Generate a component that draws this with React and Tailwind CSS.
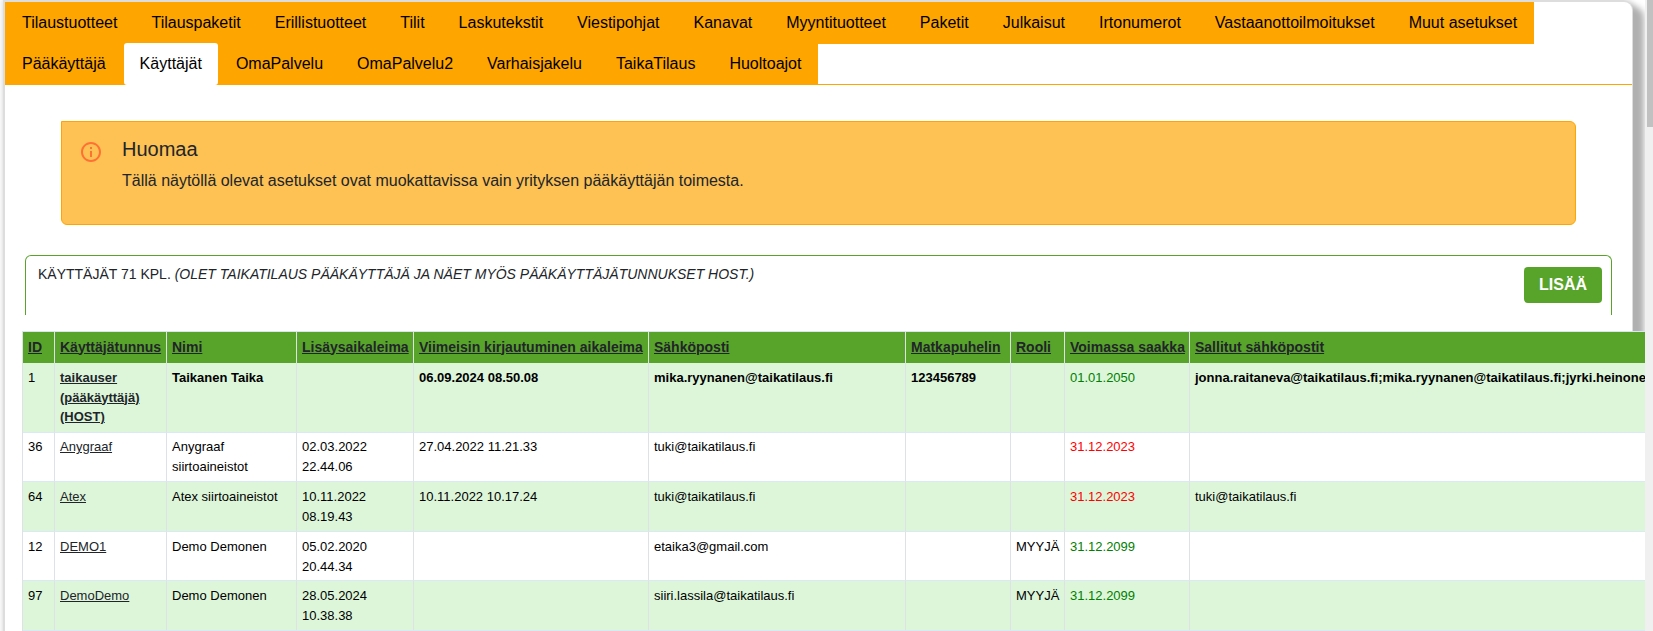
const TABS_TOP = ['Tilaustuotteet', 'Tilauspaketit', 'Erillistuotteet', 'Tilit', 'Laskutekstit', 'Viestipohjat', 'Kanavat', 'Myyntituotteet', 'Paketit', 'Julkaisut', 'Irtonumerot', 'Vastaanottoilmoitukset', 'Muut asetukset'];
const TABS_BOTTOM = ['Pääkäyttäjä', 'Käyttäjät', 'OmaPalvelu', 'OmaPalvelu2', 'Varhaisjakelu', 'TaikaTilaus', 'Huoltoajot'];

const COLUMNS = [
  ['ID', 32], ['Käyttäjätunnus', 112], ['Nimi', 130], ['Lisäysaikaleima', 117],
  ['Viimeisin kirjautuminen aikaleima', 235], ['Sähköposti', 257], ['Matkapuhelin', 105],
  ['Rooli', 54], ['Voimassa saakka', 125], ['Sallitut sähköpostit', 700],
];

const ROWS = [
  { h: 'h-[70px]', pad: 'pt-[5px]', bold: true, valid: true, cells: ['1', ['taikauser', '(pääkäyttäjä)', '(HOST)'], 'Taikanen Taika', '', '06.09.2024 08.50.08', 'mika.ryynanen@taikatilaus.fi', '123456789', '', '01.01.2050', 'jonna.raitaneva@taikatilaus.fi;mika.ryynanen@taikatilaus.fi;jyrki.heinone'] },
  { h: 'h-[49px]', pad: 'pt-1', valid: false, cells: ['36', ['Anygraaf'], 'Anygraaf siirtoaineistot', '02.03.2022 22.44.06', '27.04.2022 11.21.33', 'tuki@taikatilaus.fi', '', '', '31.12.2023', ''] },
  { h: 'h-[50px]', pad: 'pt-[5px]', valid: false, cells: ['64', ['Atex'], 'Atex siirtoaineistot', '10.11.2022 08.19.43', '10.11.2022 10.17.24', 'tuki@taikatilaus.fi', '', '', '31.12.2023', 'tuki@taikatilaus.fi'] },
  { h: 'h-[49px]', pad: 'pt-[5px]', valid: true, cells: ['12', ['DEMO1'], 'Demo Demonen', '05.02.2020 20.44.34', '', 'etaika3@gmail.com', '', 'MYYJÄ', '31.12.2099', ''] },
  { h: 'h-[50px]', pad: 'pt-[5px]', valid: true, cells: ['97', ['DemoDemo'], 'Demo Demonen', '28.05.2024 10.38.38', '', 'siiri.lassila@taikatilaus.fi', '', 'MYYJÄ', '31.12.2099', ''] },
];

function Tab({ label, active }) {
  return (
    <a className={active
      ? 'mx-px rounded-[3px] bg-white px-4 py-[9px] text-black'
      : 'border border-[#ffa500] px-4 py-2 text-black'}>
      {label}
    </a>
  );
}

function Tabs() {
  return (
    <nav className="flex h-[83px] flex-col items-start border-b border-[#ffa500] text-base leading-6">
      <div className="flex h-[42px] shrink-0 bg-[#ffa500]">
        {TABS_TOP.map((t) => <Tab key={t} label={t} />)}
      </div>
      <div className="-mt-px flex h-[42px] shrink-0 bg-[#ffa500]">
        {TABS_BOTTOM.map((t) => <Tab key={t} label={t} active={t === 'Käyttäjät'} />)}
      </div>
    </nav>
  );
}

function Notice() {
  return (
    <section className="mt-9 mr-14 ml-14 flex h-[104px] rounded-md rounded-tl-none border border-[#ffa500] bg-[#fdc154] text-[#212529]">
      <svg className="mt-[18px] ml-[17px] size-6" viewBox="0 0 24 24" fill="#ff7033">
        <path d="M11 7h2v2h-2zm0 4h2v6h-2zm1-9C6.48 2 2 6.48 2 12s4.48 10 10 10 10-4.48 10-10S17.52 2 12 2zm0 18c-4.41 0-8-3.59-8-8s3.59-8 8-8 8 3.59 8 8-3.59 8-8 8z" />
      </svg>
      <div className="ml-[19px] pt-[15px]">
        <h2 className="text-xl leading-6">Huomaa</h2>
        <p className="mt-2 text-base leading-6">Tällä näytöllä olevat asetukset ovat muokattavissa vain yrityksen pääkäyttäjän toimesta.</p>
      </div>
    </section>
  );
}

function UserTable() {
  return (
    <table className="mt-4 ml-[17px] w-[1867px] table-fixed border-separate border-spacing-0 border-t border-l border-t-[#d9e6f2] border-l-[#dee2e6] text-[13px] leading-[19.5px]">
      <colgroup>
        {COLUMNS.map(([name, width]) => <col key={name} style={{ width }} />)}
      </colgroup>
      <thead>
        <tr className="h-[31px] bg-[#58a42b] text-left text-sm text-[#212529]">
          {COLUMNS.map(([name]) => (
            <th key={name} className="border-r border-[#dee2e6] p-0 pb-0.5 pl-[5px] align-middle font-bold whitespace-nowrap underline">{name}</th>
          ))}
        </tr>
      </thead>
      <tbody>
        {ROWS.map((row) => (
          <tr key={row.cells[0]} className={`${row.h} odd:bg-[#ddf6da] even:bg-white`}>
            {row.cells.map((cell, i) => (
              <td
                key={i}
                className={[
                  'border-r border-b border-r-[#dee2e6] border-b-[#d9eaf5] p-0 pr-1 pl-[5px] align-top',
                  row.pad,
                  row.bold && i > 0 && i !== 8 ? 'font-bold' : '',
                  i === 9 ? 'whitespace-nowrap' : '',
                  i === 8 ? (row.valid ? 'text-[#008000]' : 'text-[#ff0000]') : 'text-black',
                ].join(' ')}
              >
                {i === 1
                  ? cell.map((line) => <a key={line} className="block text-[#212529] underline">{line}</a>)
                  : cell}
              </td>
            ))}
          </tr>
        ))}
      </tbody>
    </table>
  );
}

export default function App() {
  return (
    <div className="flex h-[631px] w-[1653px] overflow-hidden bg-white font-['Liberation_Sans',Arial,sans-serif]">
      <div className="w-[1645px] overflow-hidden pt-0.5 pl-[5px]">
        <main className="h-[700px] w-[1627px] rounded-tr-lg bg-white shadow-[0_0_0_1px_#ddd,-1px_-1px_0_1px_#ddd,8px_8px_6px_4px_#b0b0b0,0_0_5px_3px_#ddd]">
          <Tabs />
          <Notice />
          <section className="mt-[30px] mr-5 ml-5 flex h-[60px] items-start justify-between rounded-t-md border border-b-0 border-[#58a42b] pt-[11px] pr-[9px] pl-3">
            <h3 className="-mt-[3px] text-sm leading-[21px] text-[#212529]">
              KÄYTTÄJÄT 71 KPL. <em>(OLET TAIKATILAUS PÄÄKÄYTTÄJÄ JA NÄET MYÖS PÄÄKÄYTTÄJÄTUNNUKSET HOST.)</em>
            </h3>
            <button className="h-9 w-[78px] rounded bg-[#58a42b] text-base font-bold text-white">LISÄÄ</button>
          </section>
          <UserTable />
        </main>
      </div>
      <div className="w-2 bg-[#f0f0f0] pl-0.5">
        <div className="h-[127px] bg-[#c1c1c1]" />
      </div>
    </div>
  );
}
